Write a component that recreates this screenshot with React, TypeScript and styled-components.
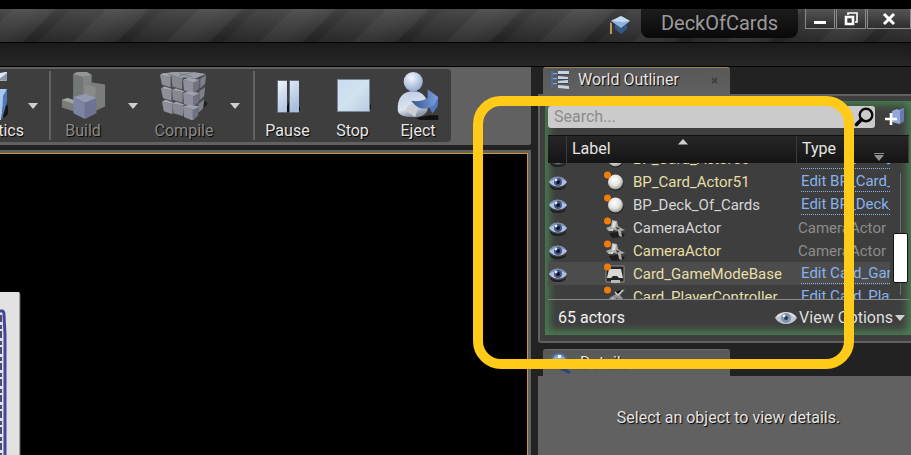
import React from "react";
import styled, { createGlobalStyle } from "styled-components";

const GlobalStyle = createGlobalStyle`
  * { box-sizing: border-box; }
  html, body { margin: 0; padding: 0; background: #222; }
  body { overflow: hidden; font-family: Roboto, "Liberation Sans", sans-serif; font-size: 16px; line-height: 20px; color: #e4e4e4; }
  button, input { font: inherit; color: inherit; border: 0; padding: 0; margin: 0; background: none; }
  svg { display: block; flex: none; }
`;

const Editor = styled.div`
  position: relative;
  display: flex;
  flex-direction: column;
  min-height: 100vh;
  border-top: 9px solid #000;
`;

const TitleBar = styled.header`
  display: flex;
  align-items: flex-start;
  justify-content: flex-end;
  height: 34px;
  border-bottom: 1px solid #000;
  background:
    linear-gradient(180deg, rgba(255, 255, 255, 0.15), rgba(255, 255, 255, 0.01) 90%),
    repeating-linear-gradient(135deg, #2b2b2b 0 8px, #343434 10px 22px, #2d2d2d 38px, #212121 41px 48px, #282828 51px, #2b2b2b 66px);
`;

const CapSlot = styled.div`
  padding: 6px 10px 0 0;
`;

const ProjectName = styled.div`
  height: 29px;
  width: 157px;
  border-radius: 0 0 8px 8px;
  background: linear-gradient(180deg, #1d1d1d, #090909);
  color: #9b9b9b;
  font-size: 20px;
  line-height: 28px;
  text-align: center;
`;

const WindowControls = styled.div`
  display: flex;
  gap: 1px;
  margin-left: 7px;
`;

const WindowButton = styled.button<{ $wide?: boolean }>`
  display: flex;
  align-items: center;
  justify-content: center;
  width: ${(p) => (p.$wide ? 44 : 30)}px;
  height: 20px;
  border: 1px solid #8a8a8a;
  border-top: 0;
  background: linear-gradient(180deg, #555, #2e2e2e);
`;

const MenuBar = styled.nav`
  height: 24px;
  border-bottom: 1px solid #000;
  background: linear-gradient(180deg, #1b1b1b, #262626);
`;

const Workspace = styled.div`
  display: grid;
  flex: 1;
  grid-template-columns: minmax(0, 1fr) 373px;
  gap: 7px;
  background: #222;
`;

const MainColumn = styled.main`
  display: flex;
  flex-direction: column;
  gap: 5px;
`;

const ToolbarFrame = styled.div`
  padding: 2px 0 3px;
  border-radius: 0 0 2px 0;
  background: #616161;
`;

const Toolbar = styled.div`
  display: flex;
  width: fit-content;
  height: 73px;
  border-radius: 0 4px 4px 0;
  background: #3e3e3e;
`;

const ToolButton = styled.button<{ $width: number; $dim?: boolean; $clipped?: boolean }>`
  display: flex;
  flex-direction: column;
  align-items: ${(p) => (p.$clipped ? "flex-end" : "center")};
  width: ${(p) => p.$width}px;
  overflow: hidden;
  padding-top: 3px;
  gap: 1px;
  color: ${(p) => (p.$dim ? "#8a8a8a" : "#e6e6e6")};
  text-shadow: 1px 1px 1px #000;
`;

const DropButton = styled.button<{ $width: number }>`
  display: flex;
  align-items: center;
  justify-content: center;
  width: ${(p) => p.$width}px;
`;

const DropSpacer = styled.span`
  width: 7px;
`;

const Divider = styled.span`
  width: 2px;
  margin: 2px 0;
  background: #636363;
`;

const Viewport = styled.section`
  display: flex;
  flex: 1;
  padding: 3px 3px 0 0;
  background: #616161;
`;

const Scene = styled.div`
  display: flex;
  flex: 1;
  align-items: flex-end;
  border-top: 1px solid #cf9a2c;
  border-right: 1px solid #cf9a2c;
  background: #000;
`;

const SideColumn = styled.aside`
  display: flex;
  flex-direction: column;
  min-width: 0;
`;

const TabStrip = styled.div`
  display: flex;
  padding-left: 5px;
`;

const Tab = styled.button<{ $active?: boolean }>`
  display: flex;
  align-items: center;
  gap: 8px;
  width: 187px;
  height: 27px;
  padding: 0 12px ${(p) => (p.$active ? 2 : 0)}px 7px;
  border-radius: 3px 3px 0 0;
  border-top: 1px solid ${(p) => (p.$active ? "#9a8555" : "#6a6a6a")};
  background: linear-gradient(180deg, #585858, #616161);
  text-shadow: 1px 1px 1px #000;
`;

const TabClose = styled.span`
  margin-left: auto;
`;

const OutlinerPanel = styled.section`
  padding: 5px 0 6px 5px;
  border: 2px solid #616161;
  border-right: 0;
  border-radius: 0 0 0 3px;
  background: #3e3e3e;
`;

const FocusGlow = styled.div`
  padding: 5px 2px 0 3px;
  background: #3e3e3e;
  box-shadow: inset 0 0 8px 4px #4a8051;
`;

const SearchRow = styled.div`
  display: flex;
  align-items: center;
  gap: 10px;
  padding-right: 4px;
`;

const SearchField = styled.label`
  display: flex;
  flex: 1;
  align-items: center;
  height: 22px;
  padding: 0 1px 0 6px;
  border-radius: 3px;
  background: #cbcbcb;
`;

const SearchInput = styled.input`
  flex: 1;
  min-width: 0;
  outline: none;
  color: #333;
  &::placeholder { color: #8b8b8b; opacity: 1; }
`;

const IconButton = styled.button`
  display: flex;
`;

const ListArea = styled.div`
  position: relative;
`;

const ActorTable = styled.table`
  display: block;
  margin-top: 7px;
`;

const HeadGroup = styled.thead`
  display: block;
`;

const HeadRow = styled.tr`
  display: grid;
  grid-template-columns: 19px minmax(0, 1fr) 112px;
  height: 28px;
  background: linear-gradient(180deg, #262626, #151515);
  border-top: 1px solid #111;
`;

const HeadCell = styled.th<{ $last?: boolean }>`
  display: flex;
  justify-content: space-between;
  padding: 3px ${(p) => (p.$last ? 24 : 0)}px 0 5px;
  border-right: 1px solid #3c3c3c;
  font-weight: 400;
  text-align: left;
`;

const SortMark = styled.span`
  flex: 1;
  padding-left: 67px;
`;

const FilterMark = styled.span`
  align-self: flex-end;
  padding-bottom: 2px;
`;

const BodyGroup = styled.tbody`
  display: block;
  height: 136px;
  overflow: hidden;
  font-size: 15px;
`;

const ActorRow = styled.tr<{ $selected?: boolean }>`
  display: grid;
  grid-template-columns: 20px 65px minmax(0, 1fr) 93px;
  align-items: center;
  height: 23px;
  margin-right: 19px;
  background: ${(p) => (p.$selected ? "#4c4c4c" : "transparent")};
  &:first-child { margin-top: -16px; }
`;

const Cell = styled.td<{ $tone?: "warm" | "plain" | "dim"; $indent?: number }>`
  padding: 0 0 0 ${(p) => p.$indent ?? 0}px;
  overflow: hidden;
  white-space: nowrap;
  color: ${(p) => (p.$tone === "warm" ? "#e6dfa6" : p.$tone === "dim" ? "#8c8c8c" : "#d6d6d6")};
`;

const EditLink = styled.a`
  display: block;
  height: 21px;
  line-height: 21px;
  overflow: hidden;
  border-bottom: 1px dotted #86b2ee;
  color: #86b2ee;
  text-decoration: none;
`;

const ScrollTrack = styled.div`
  position: absolute;
  top: 38px;
  bottom: 4px;
  right: 1px;
  width: 15px;
  background: linear-gradient(#6c6c6c, #6c6c6c) center / 1px 100% no-repeat;
`;

const ScrollThumb = styled.div`
  height: 50px;
  margin-top: 60px;
  border: 1px solid #111;
  border-radius: 2px;
  background: #fff;
`;

const Footer = styled.footer`
  display: flex;
  align-items: center;
  justify-content: space-between;
  height: 36px;
  padding: 0 4px 0 10px;
  border-top: 1px solid #8a8a8a;
  color: #f0f0f0;
`;

const ViewOptions = styled.button`
  display: flex;
  align-items: center;
  gap: 2px;
  color: #dedede;
`;

const DetailsTabStrip = styled(TabStrip)`
  padding-top: 6px;
`;

const DetailsPanel = styled.section`
  flex: 1;
  padding: 32px 0 0 8px;
  background: #616161;
  text-align: center;
  text-shadow: 1px 1px 1px #000;
`;

const Highlight = styled.div`
  position: absolute;
  top: 87px;
  right: 57px;
  width: 381px;
  height: 273px;
  border: 10px solid #ffca18;
  border-radius: 28px;
  pointer-events: none;
`;

const Caret = ({ up = false }: { up?: boolean }) => (
  <svg width="10" height="6" viewBox="0 0 10 6">
    <path d={up ? "M0 5.5L5 0l5 5.5z" : "M0 0h10L5 6z"} fill="#d0d0d0" />
  </svg>
);

const CinematicsIcon = () => (
  <svg width="48" height="48" viewBox="0 0 48 48">
    <path d="M26 44l3-10 3-1v9l-4 4z" fill="#151515" />
    <path d="M4 5l25-5h2v9L4 8z" fill="#dce6f2" />
    <path d="M22 8l9-7v8z" fill="#8b97a8" />
    <path d="M4 17h27l-3 9-3 22H4z" fill="#a9c6ec" />
    <path d="M27 24l4-7v12l-5 19z" fill="#4d79bb" />
  </svg>
);

const BuildIcon = () => (
  <svg width="48" height="48" viewBox="0 0 48 50">
    <path d="M14 2l4-2h10l5 3v22L22 33l-8-4z" fill="#828484" />
    <path d="M14 2l10 3v26l-10-3z" fill="#737676" />
    <path d="M14 2l4-2h10l5 3-9 2z" fill="#949696" />
    <path d="M26 13l8-2 13 2v23l-9 4-12-4z" fill="#7b7d7d" />
    <path d="M26 13l11 2v24l-11-4z" fill="#898b8b" />
    <path d="M2 29l6-2 12 4v11l-6-1-12-4z" fill="#7a7c79" />
    <path d="M2 29l6-2 12 4-6 2z" fill="#a4a6a2" />
    <path d="M14 26l12-3 12 4-12 5z" fill="#9299b2" />
    <path d="M14 26l12 6v17l-12-6z" fill="#7d84a3" />
    <path d="M38 27l-12 5v17l12-6z" fill="#6d7391" />
  </svg>
);

const CompileIcon = () => (
  <svg width="50" height="48" viewBox="0 0 50 50">
    <path d="M32 48L47 30l3 3-15 16z" fill="#1f1f22" />
    <path d="M2 3l28-3 18 3-3 32-13 12L4 36z" fill="#4b4d53" />
    <path d="M0 2l13-2h22l13 2-12 5z" fill="#9a9da5" />
    {[0, 1, 2].map((r) => (
      <g key={r}>
        <path d={`M${r} ${3 + r * 14}l11 2v11l-9-3z`} fill="#8d9098" />
        <path d={`M${12 + r / 2} ${5 + r * 14}l11 2v11l-10-3z`} fill="#868991" />
        <path d={`M24 ${8 + r * 14}l11 3v12l-10-4z`} fill="#8d909c" />
        <path d={`M${35 - r / 2} ${11 + r * 14}l6-4v10l-6 6z`} fill="#6f727e" />
        <path d={`M${42 - r} ${7 + r * 13}l6-4-1 9-5 5z`} fill="#7d808b" />
        <path d={`M${r} ${3 + r * 14}l4-2 8 3-1 1z`} fill="#a8abb1" />
        <path d={`M${12 + r / 2} ${5 + r * 14}l4-2 9 3-2 1z`} fill="#a1a4ab" />
        <path d={`M24 ${8 + r * 14}l6-2 11 2-6 3z`} fill="#9fa2ad" />
      </g>
    ))}
    <path d="M8 2l15 5M20 1l13 4M35 0L20 4" stroke="#777a82" strokeWidth="1" />
  </svg>
);

const PauseIcon = () => (
  <svg width="48" height="48" viewBox="0 0 48 48">
    <defs>
      <linearGradient id="pauseFill" x1="0" y1="0" x2="0.6" y2="1">
        <stop offset="0" stopColor="#eef4fa" />
        <stop offset="1" stopColor="#a9bfe0" />
      </linearGradient>
    </defs>
    <path d="M22 36l3-6v10h-3zM34 36l2-2v5h-2z" fill="#111" />
    <path d="M13 8h10v33H13zM25 8h10v33H25z" fill="#66707c" />
    <path d="M14 9h9v31h-9zM26 9h9v31h-9z" fill="url(#pauseFill)" />
  </svg>
);

const StopIcon = () => (
  <svg width="48" height="48" viewBox="0 0 48 48">
    <defs>
      <linearGradient id="stopFill" x1="0" y1="0" x2="1" y2="1">
        <stop offset="0" stopColor="#cbdcf2" />
        <stop offset="0.5" stopColor="#d0e2ee" />
        <stop offset="1" stopColor="#bccbe6" />
      </linearGradient>
    </defs>
    <path d="M38 38l4-6v4l-2 4z" fill="#111" />
    <path d="M8 7h33v33H8z" fill="#7b8898" />
    <path d="M9 8h31v31H9z" fill="url(#stopFill)" />
  </svg>
);

const EjectIcon = () => (
  <svg width="48" height="48" viewBox="0 0 48 50">
    <defs>
      <radialGradient id="headFill" cx="0.4" cy="0.3" r="0.7">
        <stop offset="0" stopColor="#f4f8fd" />
        <stop offset="1" stopColor="#97acd0" />
      </radialGradient>
      <linearGradient id="bodyFill" x1="0" y1="0" x2="0.3" y2="1">
        <stop offset="0" stopColor="#b9cae8" />
        <stop offset="0.7" stopColor="#dde4ee" />
        <stop offset="1" stopColor="#8d97ac" />
      </linearGradient>
      <linearGradient id="arrowFill" x1="0" y1="0" x2="1" y2="0">
        <stop offset="0" stopColor="#35558c" />
        <stop offset="1" stopColor="#7b9fe2" />
      </linearGradient>
    </defs>
    <path d="M22 48l14-3h9v5H26z" fill="#111" />
    <path d="M3 40C2 27 8 20 19 20s16 8 15 19c-1 5-7 8-15 8S3 45 3 40z" fill="url(#bodyFill)" />
    <path d="M11 40c2-6 8-9 14-6l-4 13z" fill="#ccd0d6" />
    <circle cx="19" cy="10" r="10" fill="url(#headFill)" />
    <path d="M17 30c6 1 12 0 17-3v-9l11 8-1 10-5 7-3-6c-7 3-13 1-19-7z" fill="url(#arrowFill)" />
    <path d="M39 43l-3-6 5-3 4-8-1 10z" fill="#5078c4" />
  </svg>
);

const CapIcon = () => (
  <svg width="22" height="20" viewBox="0 0 22 20">
    <path d="M6 9l6 3 6-3v5l-6 5-6-5z" fill="#36577f" />
    <path d="M2 6l10-5 9 5-9 7z" fill="#8fb2df" />
    <path d="M2 6l10-5 9 5-7 1z" fill="#c5dbf3" />
    <path d="M2 7l1 2v10H1V8z" fill="#b89958" />
  </svg>
);

const MinimizeIcon = () => (
  <svg width="14" height="14" viewBox="0 0 14 14"><path d="M1 9h12v3H1z" fill="#fff" /></svg>
);

const RestoreIcon = () => (
  <svg width="14" height="14" viewBox="0 0 14 14">
    <path d="M4 3V1h9v9h-2" fill="none" stroke="#fff" strokeWidth="1.6" />
    <path d="M2 5h7v7H2z" fill="none" stroke="#fff" strokeWidth="2.6" />
  </svg>
);

const CloseIcon = () => (
  <svg width="14" height="14" viewBox="0 0 14 14"><path d="M2 2l10 10M12 2L2 12" stroke="#fff" strokeWidth="3" /></svg>
);

const OutlinerIcon = () => (
  <svg width="20" height="20" viewBox="0 0 20 20">
    <path d="M2 1v16M2 4h4M2 9h4M2 14h4" stroke="#4d6c9f" strokeWidth="2" />
    <path d="M8 1h11v3H8zM8 6l10 1v2H8zM8 11l10-1v3H8zM8 15l11 1v3l-11-1z" fill="#c7d4e6" />
    <path d="M8 4h11v1H8zM8 9h10v1H8zM8 13h10v1H8z" fill="#3a4454" />
    <path d="M3 3h4v1H3zM3 8h4v1H3zM3 13h4v1H3z" fill="#89aadb" />
  </svg>
);

const DetailsIcon = () => (
  <svg width="22" height="22" viewBox="0 0 22 22">
    <path d="M11 17l9 4-5-5z" fill="#26477d" stroke="#26477d" strokeWidth="2" />
    <circle cx="9" cy="9" r="7.5" fill="#91a7ca" stroke="#546b94" strokeWidth="2" />
    <path d="M8 3h3v3H8zM7 8h4v6H7z" fill="#f0f4fa" />
  </svg>
);

const MagnifierIcon = () => (
  <svg width="20" height="20" viewBox="0 0 20 20">
    <circle cx="12" cy="8" r="6.3" fill="none" stroke="#080808" strokeWidth="2.4" />
    <path d="M7.5 12.5L2.5 17.5" stroke="#080808" strokeWidth="3.6" strokeLinecap="round" />
  </svg>
);

const NewFolderIcon = () => (
  <svg width="20" height="20" viewBox="0 0 20 20">
    <path d="M7 4l5-2 2 1 5-2v13l-5 3-7-2z" fill="#93a7d9" />
    <path d="M15 4l4-3v13l-4 3z" fill="#6a7cab" />
    <path d="M6 6v12M0 12h12" stroke="#fff" strokeWidth="2.6" />
  </svg>
);

const EyeIcon = () => (
  <svg width="20" height="16" viewBox="0 0 20 16">
    <path d="M1 9c3 6 14 7 18 1l-2 4c-4 3-11 3-14 0z" fill="#202124" />
    <path d="M1 8C4 1 15 1 19 8c-4 6-14 6-18 0z" fill="#b3c0e2" />
    <path d="M1 8C4 1 15 1 19 8 14 4 6 4 1 8z" fill="#7b8ab4" />
    <circle cx="10" cy="8" r="4" fill="#43568a" />
    <circle cx="10" cy="8" r="2" fill="#10131d" />
    <circle cx="8" cy="6" r="1.4" fill="#e6edfa" />
  </svg>
);

const ViewEyeIcon = () => (
  <svg width="22" height="16" viewBox="0 0 22 16">
    <path d="M0 8C4 0 18 0 22 8 17 16 5 16 0 8z" fill="#c0c4cd" />
    <path d="M2 7C6 2 16 2 20 7" fill="none" stroke="#e2e4e8" strokeWidth="1.5" />
    <circle cx="11" cy="8" r="5" fill="#7e91ad" />
    <circle cx="11" cy="8" r="2" fill="#2a3448" />
    <circle cx="9" cy="6" r="1.4" fill="#eef3fa" />
  </svg>
);

type Kind = "ball" | "camera" | "mode" | "controller";

const ActorIcon = ({ kind }: { kind: Kind }) => (
  <svg width="22" height="22" viewBox="0 0 22 22">
    <defs>
      <radialGradient id="ballFill" cx="0.42" cy="0.35" r="0.65">
        <stop offset="0" stopColor="#fff" />
        <stop offset="0.6" stopColor="#e2e2de" />
        <stop offset="1" stopColor="#9b9b96" />
      </radialGradient>
    </defs>
    {kind === "ball" && (
      <>
        <path d="M5 15c3 7 13 6 15-3z" fill="#1a1a1a" />
        <circle cx="11.5" cy="11" r="7.5" fill="url(#ballFill)" />
      </>
    )}
    {kind === "camera" && (
      <>
        <path d="M5 16l8-1 8 2-2 3-11 1z" fill="#1d1d1d" />
        <path d="M8 3l5 1 1 5 3 2 4 2-4 1 1 6-3-1-1-5-4-1-5 1-3-3 5-2z" fill="#aaaaa7" />
        <path d="M9 4l3 1-1 5-3 1zM3 13l6-1v2z" fill="#e0e0dc" />
        <path d="M12 10l4 1-3 2z" fill="#444" />
      </>
    )}
    {kind === "mode" && (
      <>
        <path d="M2 3h18v16H2z" fill="#252525" stroke="#8b8b88" strokeWidth="1" />
        <path d="M5 6h12l2 9h-4l-2-2H9l-2 2H3z" fill="#d7d7d3" />
        <path d="M7 17h9v3H7z" fill="#b9b9b5" />
      </>
    )}
    {kind === "controller" && (
      <>
        <path d="M5 12l12-7 4-2-5 6 5 6-3 1-5-4-6 4z" fill="#8f8f8c" />
        <path d="M11 6l3 3 5-5M8 12l9 8" stroke="#cfcfcb" strokeWidth="1.5" />
      </>
    )}
    <circle cx="3.5" cy="4" r="3.5" fill="#f07c0c" />
  </svg>
);

interface Actor {
  name: string;
  kind: Kind;
  edit?: string;
  type?: string;
  warm?: boolean;
  selected?: boolean;
  hidden?: boolean;
}

const actors: Actor[] = [
  { name: "BP_Card_Actor50", kind: "ball", edit: "Edit BP_Card_Actor", warm: true },
  { name: "BP_Card_Actor51", kind: "ball", edit: "Edit BP_Card_Actor", warm: true },
  { name: "BP_Deck_Of_Cards", kind: "ball", edit: "Edit BP_Deck_Of_Cards" },
  { name: "CameraActor", kind: "camera", type: "CameraActor" },
  { name: "CameraActor", kind: "camera", type: "CameraActor", warm: true },
  { name: "Card_GameModeBase", kind: "mode", edit: "Edit Card_GameModeBase", warm: true, selected: true },
  { name: "Card_PlayerController", kind: "controller", edit: "Edit Card_PlayerController", warm: true, hidden: true },
];

export default function App() {
  return (
    <Editor>
      <GlobalStyle />
      <TitleBar>
        <CapSlot><CapIcon /></CapSlot>
        <ProjectName>DeckOfCards</ProjectName>
        <WindowControls>
          <WindowButton aria-label="Minimize"><MinimizeIcon /></WindowButton>
          <WindowButton aria-label="Restore"><RestoreIcon /></WindowButton>
          <WindowButton aria-label="Close" $wide><CloseIcon /></WindowButton>
        </WindowControls>
      </TitleBar>
      <MenuBar />
      <Workspace>
        <MainColumn>
          <ToolbarFrame>
            <Toolbar>
              <ToolButton $width={24} $clipped><CinematicsIcon /><span>Cinematics</span></ToolButton>
              <DropButton $width={18} aria-label="Cinematics options"><Caret /></DropButton>
              <DropSpacer />
              <Divider />
              <ToolButton $width={64} $dim><BuildIcon /><span>Build</span></ToolButton>
              <DropButton $width={36} aria-label="Build options"><Caret /></DropButton>
              <ToolButton $width={66} $dim><CompileIcon /><span>Compile</span></ToolButton>
              <DropButton $width={36} aria-label="Compile options"><Caret /></DropButton>
              <Divider />
              <ToolButton $width={65}><PauseIcon /><span>Pause</span></ToolButton>
              <ToolButton $width={65}><StopIcon /><span>Stop</span></ToolButton>
              <ToolButton $width={66}><EjectIcon /><span>Eject</span></ToolButton>
            </Toolbar>
          </ToolbarFrame>
          <Viewport>
            <Scene>
              <svg width="24" height="164" viewBox="0 0 24 164">
                <path d="M0 1h19l1 2v161H0z" fill="#e2e2e2" />
                <path d="M20 3v161" stroke="#5a5a5a" />
                <path d="M0 20h2c2 0 2 2 2 4l1 20v120" fill="none" stroke="#44469a" strokeWidth="3" />
                <path d="M1 24v140" stroke="#4b4a78" strokeWidth="2" strokeDasharray="7 3 4 2" />
              </svg>
            </Scene>
          </Viewport>
        </MainColumn>
        <SideColumn>
          <TabStrip>
            <Tab $active>
              <OutlinerIcon />
              <span>World Outliner</span>
              <TabClose>
                <svg width="7" height="7" viewBox="0 0 7 7"><path d="M1 1l5 5M6 1L1 6" stroke="#404040" strokeWidth="2" /></svg>
              </TabClose>
            </Tab>
          </TabStrip>
          <OutlinerPanel>
            <FocusGlow>
              <SearchRow>
                <SearchField>
                  <SearchInput aria-label="Search actors" placeholder="Search..." />
                  <MagnifierIcon />
                </SearchField>
                <IconButton aria-label="New folder"><NewFolderIcon /></IconButton>
              </SearchRow>
              <ListArea>
                <ActorTable>
                  <HeadGroup>
                    <HeadRow>
                      <HeadCell aria-label="Visibility" />
                      <HeadCell>Label<SortMark><Caret up /></SortMark></HeadCell>
                      <HeadCell $last>
                        Type
                        <FilterMark>
                          <svg width="10" height="8" viewBox="0 0 10 8"><path d="M0 0h10v1H0zM0 2h10L5 8z" fill="#8f8f8f" /></svg>
                        </FilterMark>
                      </HeadCell>
                    </HeadRow>
                  </HeadGroup>
                  <BodyGroup>
                    {actors.map((a, i) => (
                      <ActorRow key={i} $selected={a.selected}>
                        <Cell>{!a.hidden && <EyeIcon />}</Cell>
                        <Cell $indent={36}><ActorIcon kind={a.kind} /></Cell>
                        <Cell $tone={a.warm ? "warm" : "plain"}>{a.name}</Cell>
                        <Cell $tone="dim" $indent={a.edit ? 4 : 1}>
                          {a.edit ? <EditLink href="#">{a.edit}</EditLink> : a.type}
                        </Cell>
                      </ActorRow>
                    ))}
                  </BodyGroup>
                </ActorTable>
                <ScrollTrack><ScrollThumb /></ScrollTrack>
              </ListArea>
              <Footer>
                <span>65 actors</span>
                <ViewOptions><ViewEyeIcon /><span>View Options</span><Caret /></ViewOptions>
              </Footer>
            </FocusGlow>
          </OutlinerPanel>
          <DetailsTabStrip>
            <Tab><DetailsIcon /><span>Details</span></Tab>
          </DetailsTabStrip>
          <DetailsPanel>Select an object to view details.</DetailsPanel>
        </SideColumn>
      </Workspace>
      <Highlight />
    </Editor>
  );
}
